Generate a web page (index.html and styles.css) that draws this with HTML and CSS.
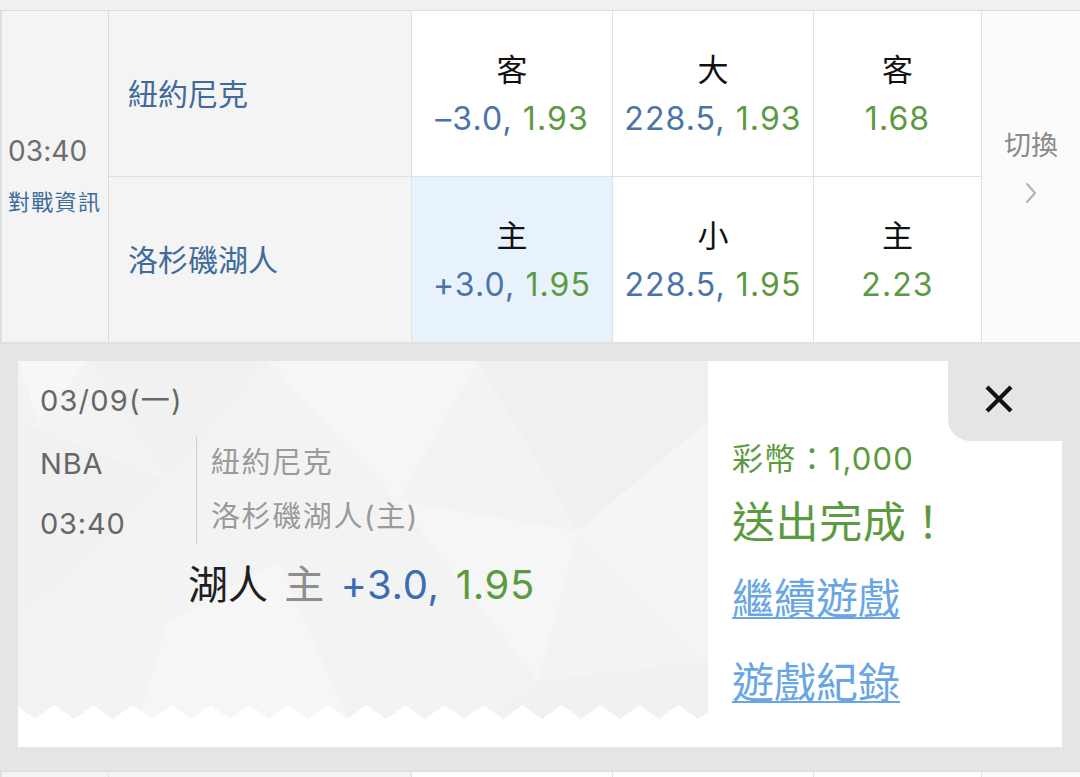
FILE: index.html
```html
<!DOCTYPE html>
<html lang="zh-Hant">
<head>
<meta charset="utf-8">
<title>NBA</title>
<link rel="stylesheet" href="styles.css">
</head>
<body>
<div class="page">
  <div class="topstrip"></div>
  <div class="match">
    <div class="cell time">
      <div class="t">03:40</div>
      <div class="info">對戰資訊</div>
    </div>
    <div class="cell team">紐約尼克</div>
    <div class="cell odd"><div class="lab">客</div><div class="val"><span class="b">–3.0,</span> <span class="g">1.93</span></div></div>
    <div class="cell odd"><div class="lab">大</div><div class="val"><span class="b">228.5,</span> <span class="g">1.93</span></div></div>
    <div class="cell odd"><div class="lab">客</div><div class="val"><span class="g">1.68</span></div></div>
    <div class="cell switch">
      <div class="sw">切換</div>
      <svg class="chev" width="14" height="24" viewBox="0 0 14 24"><polyline points="3,3 11,12 3,21" fill="none" stroke="#b0b0b0" stroke-width="2" stroke-linecap="round" stroke-linejoin="round"/></svg>
    </div>
    <div class="cell team">洛杉磯湖人</div>
    <div class="cell odd sel"><div class="lab">主</div><div class="val"><span class="b">+3.0,</span> <span class="g">1.95</span></div></div>
    <div class="cell odd"><div class="lab">小</div><div class="val"><span class="b">228.5,</span> <span class="g">1.95</span></div></div>
    <div class="cell odd"><div class="lab">主</div><div class="val"><span class="g">2.23</span></div></div>
  </div>

  <div class="expand">
    <div class="card">
      <div class="ticket">
        <svg class="poly" width="690" height="358" viewBox="0 0 690 358">
          <polygon points="0,0 70,0 20,60" fill="#f7f7f7"/>
          <polygon points="70,0 250,0 150,120" fill="#f1f1f1"/>
          <polygon points="250,0 460,0 380,140" fill="#f6f6f6"/>
          <polygon points="460,0 690,0 690,60 560,170" fill="#f0f0f0"/>
          <polygon points="0,60 150,120 0,260" fill="#f1f1f1"/>
          <polygon points="380,140 560,170 520,320" fill="#f6f6f6"/>
          <polygon points="560,170 690,60 690,300" fill="#f5f5f5"/>
          <polygon points="150,260 260,200 330,358 120,358" fill="#f6f6f6"/>
          <polygon points="520,320 690,300 690,358 470,358" fill="#f1f1f1"/>
        </svg>
        <div class="tk-content">
          <div class="date">03/09(一)</div>
          <div class="info-row">
            <div class="lg">
              <div class="lgl">NBA</div>
              <div class="lgl">03:40</div>
            </div>
            <div class="teams">
              <div class="tl">紐約尼克</div>
              <div class="tl">洛杉磯湖人(主)</div>
            </div>
          </div>
          <div class="bet"><span class="bn">湖人</span> <span class="bs">主</span> <span class="bb">+3.0,</span> <span class="g">1.95</span></div>
        </div>
        <div class="zig"></div>
      </div>
      <div class="result">
        <div class="close">
          <svg width="30" height="30" viewBox="0 0 30 30"><path d="M3 3 L27 27 M27 3 L3 27" stroke="#111" stroke-width="4.2" stroke-linecap="butt"/></svg>
        </div>
        <div class="coins">彩幣：1,000</div>
        <div class="done">送出完成！</div>
        <a class="lnk first" href="#">繼續遊戲</a>
        <a class="lnk second" href="#">遊戲紀錄</a>
      </div>
    </div>
  </div>

  <div class="match next">
    <div class="cell team2"></div>
    <div class="cell team"></div>
    <div class="cell odd"></div>
    <div class="cell odd"></div>
    <div class="cell odd"></div>
    <div class="cell switch"></div>
  </div>
</div>
</body>
</html>
```

FILE: styles.css
```css
* { box-sizing: border-box; }
html, body { margin: 0; padding: 0; }
body {
  width: 1080px;
  height: 777px;
  overflow: hidden;
  background: #e5e5e5;
  font-family: Inter, "Noto Sans CJK TC", sans-serif;
}
.page { width: 1080px; height: 777px; overflow: hidden; }
.topstrip {
  height: 11px;
  background: #eff0f2;
  border-bottom: 1px solid #d8dbe1;
}
.match {
  display: grid;
  grid-template-columns: 107px 303px 201px 201px 168px 1fr;
  grid-template-rows: 166px 166px;
  border-left: 2px solid #dcdfe4;
  background: #fff;
}
.cell {
  border-right: 1px solid #dfe1e5;
  border-bottom: 1px solid #dfe1e5;
}
.time {
  grid-row: span 2;
  background: #f4f4f4;
  border-right-color: #d6d9de;
  display: flex;
  flex-direction: column;
  justify-content: center;
  padding-left: 6px;
}
.time .t {
  font-size: 28px;
  line-height: 40px;
  color: #6d6d6d;
  letter-spacing: 0.1px;
}
.time .info {
  margin-top: 11px;
  font-size: 22px;
  line-height: 40px;
  color: #3f6b9b;
  letter-spacing: 1.3px;
}
.team {
  background: #f4f4f4;
  display: flex;
  align-items: center;
  padding-left: 19px;
  padding-bottom: 3px;
  font-size: 30px;
  color: #3f6b9b;
}
.odd {
  display: flex;
  flex-direction: column;
  justify-content: center;
  align-items: center;
}
.odd.sel { background: #e7f2fc; }
.lab {
  font-size: 31px;
  line-height: 49px;
  color: #111;
}
.val {
  font-size: 32px;
  line-height: 49px;
  letter-spacing: 1.1px;
  white-space: nowrap;
}
.b { color: #4a74a8; }
.g { color: #5b9a3e; }
.switch {
  grid-row: span 2;
  grid-column: 6;
  border-right: none;
  background: #fbfbfb;
  display: flex;
  flex-direction: column;
  align-items: center;
  justify-content: center;
  padding-bottom: 22px;
}
.sw {
  font-size: 27px;
  line-height: 40px;
  color: #8a8a8a;
}
.chev { margin-top: 15px; }

.expand {
  height: 428px;
  padding: 17px 18px 0 18px;
  background: #e5e5e5;
  border-top: 1px solid #e0e0e0;
}
.card {
  height: 386px;
  background: #fff;
  display: flex;
  align-items: flex-start;
}
.ticket {
  position: relative;
  width: 690px;
  height: 358px;
  background: #f3f3f3;
  display: flex;
  flex-direction: column;
  border-bottom-right-radius: 8px;
  overflow: hidden;
}
.poly { position: absolute; left: 0; top: 0; }
.tk-content {
  position: relative;
  padding-left: 22px;
}
.date {
  margin-top: 22px;
  font-size: 29px;
  line-height: 36px;
  color: #676767;
  letter-spacing: 1.2px;
}
.info-row {
  display: flex;
  margin-top: 16px;
}
.lg { width: 156px; }
.lgl {
  font-size: 29px;
  line-height: 60px;
  color: #676767;
  letter-spacing: 0.8px;
}
.lgl:first-child { margin-top: -1px; }
.teams {
  border-left: 1px solid #cfcfcf;
  padding-left: 14px;
  height: 108px;
  margin-top: 1px;
}
.tl {
  font-size: 29px;
  line-height: 55px;
  color: #9a9a9a;
  margin-top: -1px;
  letter-spacing: 1.6px;
}
.bet {
  margin-top: 6px;
  margin-left: 148px;
  font-size: 40px;
  line-height: 50px;
  white-space: nowrap;
  word-spacing: 5px;
}
.bn { color: #1f1f1f; }
.bs { color: #8e8e8e; }
.bb { color: #3a6db3; letter-spacing: 0.6px; }
.bet .g { letter-spacing: 0.6px; }
.zig {
  position: relative;
  margin-top: auto;
  height: 14px;
  background: conic-gradient(from 125.7deg at 50% 0, #fff 0deg 108.6deg, transparent 108.6deg) 0 0 / 39px 14px repeat-x;
  background-position: 17px 0;
}
.result {
  position: relative;
  flex: 1;
  height: 386px;
  padding-left: 24px;
  display: flex;
  flex-direction: column;
  align-items: flex-start;
}
.close {
  position: absolute;
  top: 0;
  right: 0;
  width: 114px;
  height: 80px;
  background: #e5e5e5;
  border-bottom-left-radius: 22px;
  display: flex;
  align-items: center;
  justify-content: center;
  padding-right: 12px;
  padding-bottom: 4px;
}
.coins {
  margin-top: 78px;
  font-size: 31px;
  line-height: 40px;
  color: #5b9a3e;
  letter-spacing: 1.2px;
}
.done {
  margin-top: 13px;
  font-size: 43px;
  line-height: 60px;
  color: #5b9a3e;
  letter-spacing: 0.6px;
}
.lnk {
  font-size: 42px;
  line-height: 60px;
  color: #6aa6e4;
  text-decoration: underline;
  text-decoration-thickness: 2px;
  text-underline-offset: 3px;
}
.lnk.first { margin-top: 17px; }
.lnk.second { margin-top: 24px; }

.match.next {
  border-top: 1px solid #d9dce1;
  grid-template-rows: 6px;
}
.team2 { background: #f4f4f4; }
.next .switch { grid-row: span 1; padding: 0; }
.next .team { padding: 0; }
```
